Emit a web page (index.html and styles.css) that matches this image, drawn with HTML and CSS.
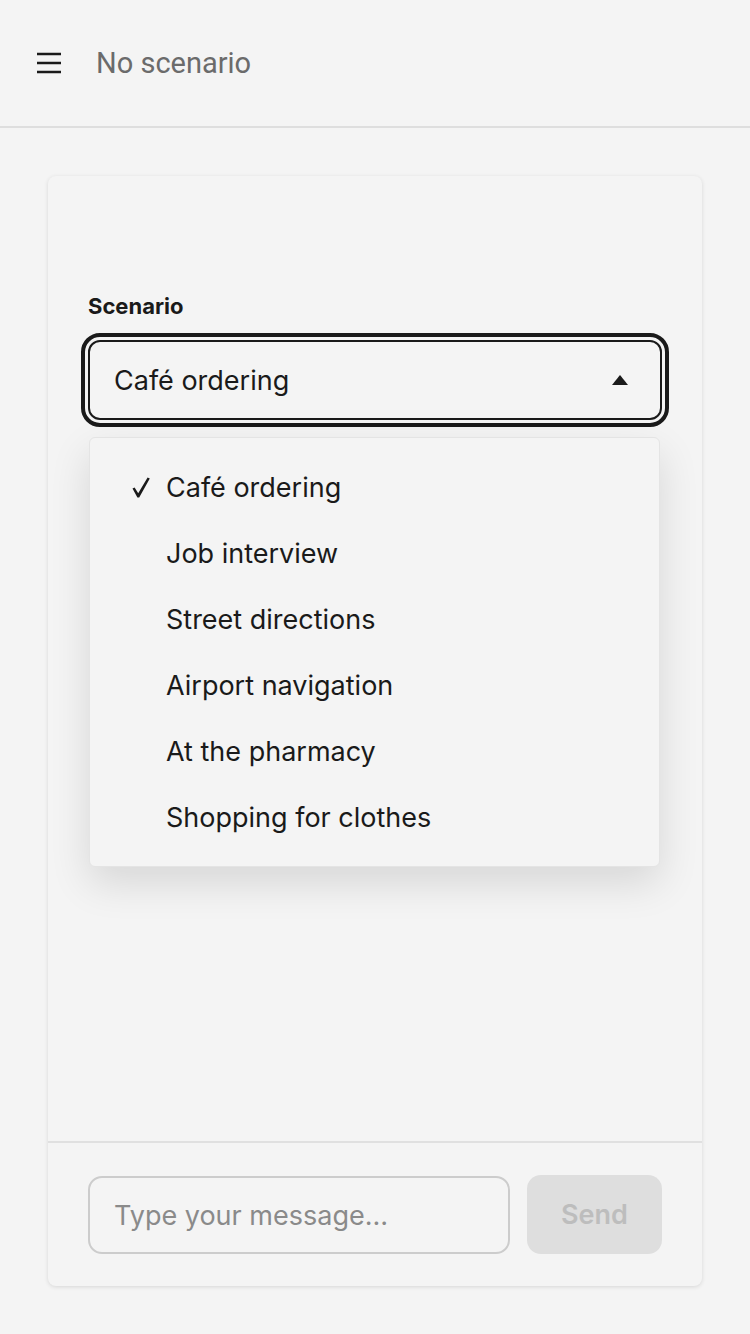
FILE: index.html
```html
<!DOCTYPE html>
<html lang="en">
<head>
  <meta charset="UTF-8">
  <meta name="viewport" content="width=device-width, initial-scale=1.0">
  <title>Scenario Chat</title>
  <link rel="stylesheet" href="styles.css">
</head>
<body>
  <header class="topbar">
    <button class="menu-btn" aria-label="Menu">
      <svg width="26" height="22" viewBox="0 0 26 22">
        <path d="M1 2h24M1 11h24M1 20h24" stroke="#1a1a1a" stroke-width="2.4" fill="none"/>
      </svg>
    </button>
    <span class="topbar-title">No scenario</span>
  </header>

  <main class="page">
    <div class="card">
      <div class="card-body">
        <label class="field-label">Scenario</label>
        <div class="select-wrap">
          <div class="select-box">
            <span>Café ordering</span>
            <span class="caret"></span>
          </div>
          <ul class="options">
            <li class="option selected">
              <span class="check">
                <svg width="18" height="21" viewBox="0 0 18 21">
                  <path d="M0.5 11.5 L2.6 10.4 L6.2 16.2 L15.6 0.5 L17.8 1.6 L7.2 20.5 L5.4 20.5 Z" fill="#1a1a1a"/>
                </svg>
              </span>Café ordering</li>
            <li class="option"><span class="check"></span>Job interview</li>
            <li class="option"><span class="check"></span>Street directions</li>
            <li class="option"><span class="check"></span>Airport navigation</li>
            <li class="option"><span class="check"></span>At the pharmacy</li>
            <li class="option"><span class="check"></span>Shopping for clothes</li>
          </ul>
        </div>
      </div>
      <div class="composer">
        <input class="msg-input" type="text" placeholder="Type your message…">
        <button class="send-btn" disabled>Send</button>
      </div>
    </div>
  </main>
</body>
</html>
```

FILE: styles.css
```css
* {
  box-sizing: border-box;
}

body {
  margin: 0;
  background-color: #f4f4f4;
  font-family: "Inter", "Liberation Sans", sans-serif;
  color: #1a1a1a;
}

.topbar {
  height: 128px;
  display: flex;
  align-items: center;
  padding: 0 36px;
  gap: 34px;
  border-bottom: 2px solid #dedede;
}

.menu-btn {
  background: none;
  border: none;
  padding: 0;
  display: flex;
}

.topbar-title {
  font-family: "Roboto", sans-serif;
  font-size: 29px;
  color: #6b6b6b;
}

.page {
  padding: 48px 48px;
}

.card {
  height: 1110px;
  background-color: #f4f4f4;
  border-radius: 8px;
  box-shadow: 0 1px 4px rgba(0, 0, 0, 0.12);
  display: flex;
  flex-direction: column;
}

.card-body {
  flex: 1;
  padding: 117px 40px 0;
}

.field-label {
  display: block;
  font-size: 22px;
  font-weight: 700;
  margin-bottom: 21px;
}

.select-wrap {
  position: relative;
}

.select-box {
  height: 80px;
  border: 2px solid #1a1a1a;
  border-radius: 12px;
  outline: 4px solid #1a1a1a;
  outline-offset: 3px;
  display: flex;
  align-items: center;
  justify-content: space-between;
  padding: 0 32px 0 24px;
  font-size: 27px;
}

.caret {
  width: 0;
  height: 0;
  border-left: 8px solid transparent;
  border-right: 8px solid transparent;
  border-bottom: 10px solid #1a1a1a;
}

.options {
  position: absolute;
  top: 97px;
  left: 1px;
  right: 2px;
  margin: 0;
  padding: 16px 0;
  list-style: none;
  background-color: #f4f4f4;
  border: 1px solid #e4e4e4;
  border-radius: 6px;
  box-shadow: 0 16px 40px rgba(0, 0, 0, 0.12);
}

.option {
  height: 66px;
  display: flex;
  align-items: center;
  padding-left: 42px;
  font-size: 27px;
}

.check {
  width: 34px;
  display: flex;
  align-items: center;
}

.composer {
  border-top: 2px solid #e0e0e0;
  padding: 33px 40px 32px;
  display: flex;
  gap: 17px;
}

.msg-input {
  flex: 1;
  min-width: 0;
  height: 78px;
  border: 2px solid #cccccc;
  border-radius: 14px;
  background: transparent;
  padding: 0 24px;
  font-family: inherit;
  font-size: 27px;
  color: #1a1a1a;
}

.msg-input::placeholder {
  color: #8a8a8a;
}

.send-btn {
  flex-shrink: 0;
  width: 135px;
  height: 79px;
  margin-top: -1px;
  border: none;
  border-radius: 14px;
  background-color: #dedede;
  color: #bdbdbd;
  font-family: inherit;
  font-size: 27px;
  font-weight: 600;
}
```
